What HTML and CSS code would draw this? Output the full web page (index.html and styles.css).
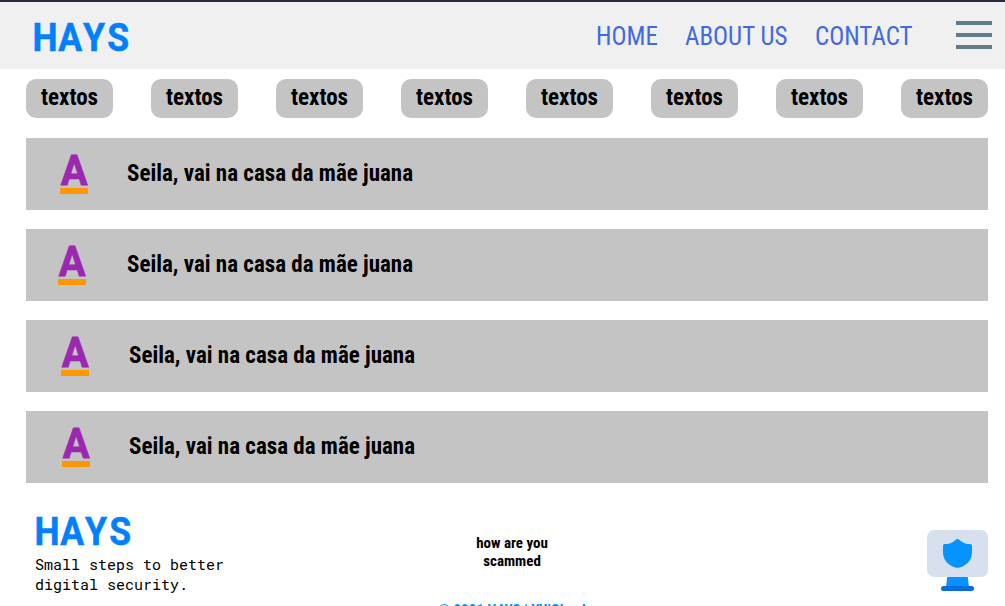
FILE: index.html
```html
<!DOCTYPE html>
<html lang="en">
<head>
<meta charset="utf-8">
<title>HAYS</title>
<link rel="stylesheet" href="styles.css">
</head>
<body>
<header class="header">
  <div class="logo"><span>H</span><span>A</span><span>Y</span><span>S</span></div>
  <nav class="nav">
    <a class="home"><span>HOME</span></a>
    <a class="about"><span>ABOUT US</span></a>
    <a class="contact"><span>CONTACT</span></a>
  </nav>
  <div class="menu"><i></i><i></i><i></i></div>
</header>
<section class="chips">
  <div class="chip"><span>textos</span></div>
  <div class="chip"><span>textos</span></div>
  <div class="chip"><span>textos</span></div>
  <div class="chip"><span>textos</span></div>
  <div class="chip"><span>textos</span></div>
  <div class="chip"><span>textos</span></div>
  <div class="chip"><span>textos</span></div>
  <div class="chip"><span>textos</span></div>
</section>
<main class="rows">
  <div class="row first"><div class="letter"><span>A</span></div><p class="title"><span>Seila, vai na casa da mãe juana</span></p></div>
  <div class="row second"><div class="letter"><span>A</span></div><p class="title"><span>Seila, vai na casa da mãe juana</span></p></div>
  <div class="row third"><div class="letter"><span>A</span></div><p class="title"><span>Seila, vai na casa da mãe juana</span></p></div>
  <div class="row fourth"><div class="letter"><span>A</span></div><p class="title"><span>Seila, vai na casa da mãe juana</span></p></div>
</main>
<footer class="footer">
  <div class="brand">
    <div class="logo"><span>H</span><span>A</span><span>Y</span><span>S</span></div>
    <p class="slogan">Small steps to better<br>digital security.</p>
  </div>
  <div class="middle">
    <p class="question"><span>how are you<br>scammed</span></p>
    <p class="copyright"><span>© 2021 HAYS | YUiCloud</span></p>
  </div>
  <svg class="monitor" width="61" height="62" viewBox="0 0 61 62">
    <path fill="#0593ff" d="M20.500 45h20l1.500 12H19z"/>
    <rect width="61" height="47" rx="7" fill="#d7e0ef"/>
    <rect x="14" y="56" width="33" height="5" rx="2.5" fill="#0a6ae0"/>
    <path fill="#0593ff" d="M30.500 9c1.500 0 2 1 3.200 2 3 2.500 6 3 9.300 3 1.300 0 2 .7 2 2v6c0 9-6 13.500-12.500 15.500q-2 .7-4 0C22 35.500 16 31 16 22v-6c0-1.300.7-2 2-2 3.300 0 6.300-.5 9.300-3 1.200-1 1.700-2 3.200-2z"/>
  </svg>
</footer>
</body>
</html>
```

FILE: styles.css
```css
* { box-sizing: border-box; }
html, body { height: 606px; overflow: hidden; }
body { margin: 0; background: #fff; font-family: "Roboto Condensed", Roboto, sans-serif; color: #000; }
p { margin: 0; }
span { display: inline-block; white-space: nowrap; }

.header { height: 69px; border-top: 2px solid #282a36; background: #f0f0f0; display: flex; padding: 0 13px 0 33px; }
.logo { display: flex; font: 700 39px/48px Roboto, sans-serif; color: #0080ff; width: 98px; height: 46px; -webkit-text-stroke: .5px #0080ff; }
.logo span { width: 24.200px; margin-left: .2px; display: flex; justify-content: center; transform: scaleX(.91); }
.header .logo { margin-top: 12px; }
.nav { display: flex; gap: 28px; margin-left: auto; margin-right: 43px; font-size: 25px; line-height: 30px; color: #4169e1; padding-top: 19px; }
.nav a { padding-top: 1px; }
.home { width: 61px; }
.about { width: 102px; }
.contact { width: 98px; }
.menu { width: 36px; display: flex; flex-direction: column; gap: 8px; padding-top: 19px; }
.menu i { height: 4px; background: #607d8b; }

.chips { display: flex; justify-content: space-between; padding: 10px 17px 0 26px; }
.chip { width: 87px; height: 39px; border-radius: 10px; background: #c4c4c4; display: flex; justify-content: center; font-weight: 700; font-size: 23px; line-height: 37px; }

.rows { display: flex; flex-direction: column; gap: 19px; padding: 20px 17px 0 26px; }
.row { height: 72px; background: #c4c4c4; display: flex; }
.letter { width: 28px; height: 40px; margin-top: 16px; border-bottom: 6px solid #ff9800; color: #9c27b0; display: flex; justify-content: center; font: 700 42px/34px Roboto, sans-serif; -webkit-text-stroke: .8px #9c27b0; }
.letter span { transform: scaleX(.95); }
.title { font-weight: 700; font-size: 23px; line-height: 71px; width: 290px; }
.first .letter { margin-left: 34px; margin-right: 39px; }
.second .letter { margin-left: 32px; margin-right: 41px; }
.third .letter { margin-left: 35px; margin-right: 40px; }
.fourth .letter { margin-left: 36px; margin-right: 39px; }

.footer { display: flex; padding: 25px 17px 0 35px; }
.brand { width: 400px; }
.slogan { font: 15px/20px "Roboto Mono", "DejaVu Sans Mono", monospace; }
.middle { width: 154px; display: flex; flex-direction: column; align-items: center; font-weight: 700; text-align: center; }
.question { font-size: 15px; line-height: 18px; margin-top: 26px; }
.copyright { color: #0593ff; font-size: 15px; line-height: 18px; margin-top: 31px; }
.monitor { margin-left: auto; margin-top: 22px; }
```
